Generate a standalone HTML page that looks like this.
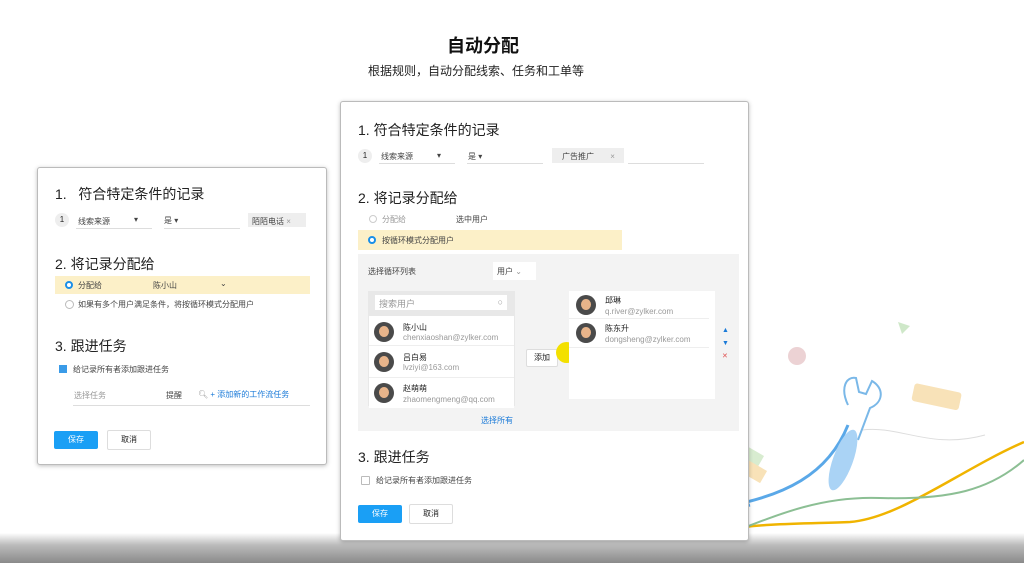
<!DOCTYPE html>
<html><head><meta charset="utf-8"><style>
*{margin:0;padding:0;box-sizing:border-box}
body{width:1024px;height:563px;overflow:hidden;background:#fff;position:relative;font-family:"Liberation Sans","Noto Sans CJK SC",sans-serif;color:#222}
.a{position:absolute;white-space:nowrap}
.card{position:absolute;background:#fff;border:1px solid #bbb;box-shadow:0 1px 4px rgba(0,0,0,.25);border-radius:3px}
.h{font-size:14px;color:#222}
.s{font-size:8px;color:#444}
.g{color:#999}
.line{position:absolute;border-bottom:1px solid #ddd}
.btn{position:absolute;background:#1a9ff5;color:#fff;font-size:8px;text-align:center;border-radius:2px}
.btn2{position:absolute;background:#fff;border:1px solid #ddd;font-size:8px;text-align:center;border-radius:2px}
.av{position:absolute;width:20px;height:20px;border-radius:50%;background:#4a4a4a;overflow:hidden}
.av:after{content:"";position:absolute;left:5px;top:4px;width:10px;height:11px;border-radius:50%;background:#e8b48a}
.num{position:absolute;width:14px;height:14px;border-radius:50%;background:#eee;font-size:8px;text-align:center;line-height:14px}
</style></head><body>
<svg class="a" style="left:0;top:0" width="1024" height="563">
<path d="M700 510 C790 500 830 470 848 425" stroke="#5aa8e8" stroke-width="3" fill="none"/>
<path d="M520 563 C600 530 700 515 750 505" stroke="#5aa8e8" stroke-width="3" fill="none"/>
<path d="M620 563 C700 520 780 525 850 522 C900 518 960 470 1024 442" stroke="#f0b400" stroke-width="2.5" fill="none"/>
<path d="M650 563 C750 530 800 495 880 498 C950 500 990 490 1024 460" stroke="#8cbf94" stroke-width="2" fill="none"/>
<path d="M862 430 C900 425 930 450 985 435" stroke="#ddd" stroke-width="1" fill="none"/>
<path d="M848 405 C840 388 846 376 856 378 L859 392 L866 394 L872 381 C884 388 884 402 870 408 L858 440" stroke="#7ab8e8" stroke-width="2" fill="none"/>
<ellipse cx="843" cy="460" rx="10" ry="32" transform="rotate(20 843 460)" fill="#aad3f5"/>
<rect x="915" y="383" width="48" height="18" rx="3" transform="rotate(12 915 383)" fill="#f8e2b8"/>
<circle cx="797" cy="356" r="9" fill="#ecd2d4"/>
<path d="M898 322 L910 326 L902 334Z" fill="#cfe8c9"/>
<rect x="745" y="445" width="22" height="16" transform="rotate(30 745 445)" fill="#d8ecd0"/>
<rect x="748" y="460" width="22" height="14" transform="rotate(30 748 460)" fill="#f8e2b8"/>
</svg>
<div class="a" style="left:0;top:533px;width:1024px;height:30px;background:linear-gradient(#fff,#bbb 40%,#8a8a8a)"></div>

<div class="a" style="left:447px;top:32px;font-size:18px;font-weight:bold;color:#111">自动分配</div>
<div class="a" style="left:368px;top:62px;font-size:12px;color:#222">根据规则，自动分配线索、任务和工单等</div>

<!-- left card -->
<div class="card" style="left:37px;top:167px;width:290px;height:298px">
<div class="a h" style="left:17px;top:16px">1.&nbsp;&nbsp; 符合特定条件的记录</div>
<div class="num" style="left:17px;top:45px">1</div>
<div class="a s" style="left:40px;top:48px">线索来源</div><div class="a s" style="left:96px;top:47px">▾</div>
<div class="line" style="left:38px;top:60px;width:76px"></div>
<div class="a s" style="left:126px;top:47px">是 ▾</div>
<div class="line" style="left:126px;top:60px;width:76px"></div>
<div class="a s" style="left:210px;top:45px;width:58px;height:14px;background:#eee;padding:3px 4px">陌陌电话 <span class="g">×</span></div>
<div class="a h" style="left:17px;top:86px">2. 将记录分配给</div>
<div class="a" style="left:17px;top:108px;width:255px;height:18px;background:#fcf0c8"></div>
<div class="a" style="left:27px;top:113px;width:8px;height:8px;border-radius:50%;border:2.5px solid #1a8fe8;background:#fff"></div>
<div class="a s" style="left:40px;top:112px">分配给</div><div class="a s" style="left:115px;top:112px">陈小山</div><div class="a s" style="left:182px;top:111px">⌄</div>
<div class="a" style="left:27px;top:132px;width:9px;height:9px;border-radius:50%;border:1px solid #bbb"></div>
<div class="a s" style="left:40px;top:131px">如果有多个用户满足条件，将按循环模式分配用户</div>
<div class="a h" style="left:17px;top:168px">3. 跟进任务</div>
<div class="a" style="left:21px;top:197px;width:8px;height:8px;background:#3a9be8"></div>
<div class="a s" style="left:35px;top:196px">给记录所有者添加跟进任务</div>
<div class="a s g" style="left:36px;top:222px">选择任务</div>
<div class="a s" style="left:128px;top:222px">提醒</div>
<div class="a s" style="left:160px;top:221px;color:#1a7ad8"><span class="g">🔍︎</span> + 添加新的工作流任务</div>
<div class="line" style="left:35px;top:237px;width:237px"></div>
<div class="btn" style="left:16px;top:263px;width:44px;height:18px;line-height:18px">保存</div>
<div class="btn2" style="left:69px;top:262px;width:44px;height:20px;line-height:18px">取消</div>
</div>

<!-- main card -->
<div class="card" style="left:340px;top:101px;width:409px;height:440px">
<div class="a h" style="left:17px;top:18px">1. 符合特定条件的记录</div>
<div class="num" style="left:17px;top:47px">1</div>
<div class="a s" style="left:40px;top:49px">线索来源</div><div class="a s" style="left:96px;top:49px">▾</div>
<div class="line" style="left:38px;top:61px;width:76px"></div>
<div class="a s" style="left:127px;top:49px">是 ▾</div>
<div class="line" style="left:126px;top:61px;width:76px"></div>
<div class="a s" style="left:211px;top:46px;width:72px;height:15px;background:#eee;padding:3px 10px">广告推广 <span class="g" style="margin-left:14px">×</span></div>
<div class="line" style="left:287px;top:61px;width:76px"></div>
<div class="a h" style="left:17px;top:86px">2. 将记录分配给</div>
<div class="a" style="left:28px;top:113px;width:8px;height:8px;border-radius:50%;border:1px solid #ccc"></div>
<div class="a s g" style="left:41px;top:112px">分配给</div><div class="a s" style="left:115px;top:112px">选中用户</div>
<div class="a" style="left:17px;top:128px;width:264px;height:20px;background:#fcf0c8"></div>
<div class="a" style="left:27px;top:134px;width:8px;height:8px;border-radius:50%;border:2.5px solid #1a8fe8;background:#fff"></div>
<div class="a s" style="left:41px;top:133px">按循环模式分配用户</div>
<div class="a" style="left:17px;top:152px;width:381px;height:177px;background:#f3f3f3"></div>
<div class="a s" style="left:27px;top:164px">选择循环列表</div>
<div class="a s" style="left:152px;top:160px;width:43px;height:18px;background:#fff;padding:4px 4px">用户 <span class="g">⌄</span></div>
<div class="a" style="left:27px;top:189px;width:147px;height:115px;background:#e8e8e8"></div>
<div class="a s g" style="left:34px;top:193px;width:132px;height:15px;background:#fff;padding:2px 4px;font-size:9px">搜索用户<span style="float:right">○</span></div>
<div class="a" style="left:28px;top:214px;width:145px;height:92px;background:#fff"></div>
<div class="av" style="left:33px;top:220px"></div><div class="a s" style="left:62px;top:220px;color:#222">陈小山</div><div class="a s g" style="left:62px;top:231px">chenxiaoshan@zylker.com</div>
<div class="line" style="left:28px;top:243px;width:145px;border-color:#eee"></div>
<div class="av" style="left:33px;top:250px"></div><div class="a s" style="left:62px;top:250px;color:#222">吕白易</div><div class="a s g" style="left:62px;top:261px">lvziyi@163.com</div>
<div class="line" style="left:28px;top:275px;width:145px;border-color:#eee"></div>
<div class="av" style="left:33px;top:281px"></div><div class="a s" style="left:62px;top:281px;color:#222">赵萌萌</div><div class="a s g" style="left:62px;top:293px">zhaomengmeng@qq.com</div>
<div class="a s" style="left:140px;top:313px;color:#1a7ad8">选择所有</div>
<div class="btn2" style="left:185px;top:247px;width:32px;height:18px;line-height:16px">添加</div>
<div class="a" style="left:215px;top:240px;width:21px;height:21px;border-radius:50%;background:#f3e000"></div>
<div class="a" style="left:228px;top:189px;width:146px;height:108px;background:#fff"></div>
<div class="av" style="left:235px;top:193px"></div><div class="a s" style="left:264px;top:193px;color:#222">邱琳</div><div class="a s g" style="left:264px;top:205px">q.river@zylker.com</div>
<div class="line" style="left:228px;top:216px;width:140px;border-color:#eee"></div>
<div class="av" style="left:235px;top:221px"></div><div class="a s" style="left:264px;top:221px;color:#222">陈东升</div><div class="a s g" style="left:264px;top:233px">dongsheng@zylker.com</div>
<div class="line" style="left:228px;top:245px;width:140px;border-color:#eee"></div>
<div class="a" style="left:381px;top:222px;font-size:7px;color:#1a7ad8;line-height:13px">▲<br>▼<br><span style="color:#e05050">✕</span></div>
<div class="a h" style="left:17px;top:345px">3. 跟进任务</div>
<div class="a" style="left:20px;top:374px;width:9px;height:9px;border:1px solid #bbb;border-radius:1px"></div>
<div class="a s" style="left:35px;top:373px">给记录所有者添加跟进任务</div>
<div class="btn" style="left:17px;top:403px;width:44px;height:18px;line-height:18px">保存</div>
<div class="btn2" style="left:68px;top:402px;width:44px;height:20px;line-height:18px">取消</div>
</div>
</body></html>
